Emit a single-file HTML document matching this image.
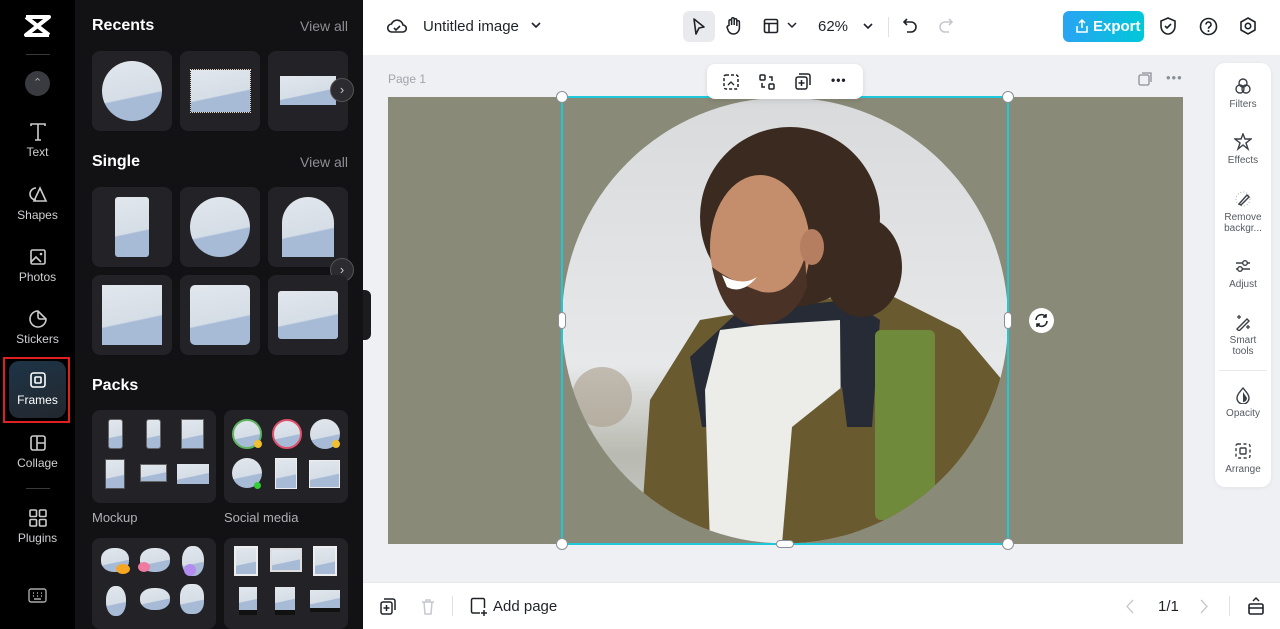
<!DOCTYPE html>
<html><head><meta charset="utf-8"><style>
*{box-sizing:border-box;margin:0;padding:0}
body{width:1280px;height:629px;overflow:hidden;position:relative;font-family:"Liberation Sans",sans-serif;background:#eef0f3}
.abs{position:absolute}
#side{left:0;top:0;width:75px;height:629px;background:#000}
.si{position:absolute;left:0;width:75px;text-align:center;color:#d0d0d4;font-size:12px}
.si svg{display:block;margin:0 auto 3px}
#panel{left:75px;top:0;width:288px;height:629px;background:#121214}
.h{position:absolute;color:#fff;font-weight:bold;font-size:16px}
.va{position:absolute;right:15px;color:#8e8e93;font-size:14px}
.card{position:absolute;width:80px;height:80px;background:#232327;border-radius:8px}
.img{position:absolute;background:linear-gradient(168deg,#e2e7ed 0%,#d5dde6 58%,#a7bad6 60%,#a7bad6 100%)}
.arrow{position:absolute;width:24px;height:24px;border-radius:50%;background:#2b2b30;border:1px solid #555;color:#ccc;font-size:13px;text-align:center;line-height:21px}
.pk{position:absolute;width:124px;height:93px;background:#232327;border-radius:8px}
.pl{position:absolute;color:#b0b0b5;font-size:13px}
#top{left:363px;top:0;width:917px;height:55px;background:#fff}
#bot{left:363px;top:582px;width:917px;height:47px;background:#fff;border-top:1px solid #e6e8eb}
.ic{position:absolute}
.rp{position:absolute;left:1215px;top:63px;width:56px;height:424px;background:#fff;border-radius:10px;box-shadow:0 1px 4px rgba(0,0,0,.06)}
.ri{position:absolute;left:0;width:56px;text-align:center;font-size:10px;color:#555a62;line-height:11px}
.ri svg{display:block;margin:0 auto 4px}
.hd{position:absolute;width:12px;height:12px;border-radius:50%;background:#fff;border:1px solid #8a8f98}
</style></head><body>

<div id="side" class="abs">
  <svg class="abs" style="left:24px;top:14px" width="27" height="24" viewBox="0 0 27 24"><path d="M2 3 L25 3 L2 21 L25 21 M2 3 L25 21" stroke="#fff" stroke-width="4" fill="none" stroke-linejoin="round"/></svg>
  <div class="abs" style="left:26px;top:54px;width:24px;height:1px;background:#3a3a3e"></div>
  <div class="abs" style="left:25px;top:71px;width:25px;height:25px;border-radius:50%;background:#3a3b40;color:#aaa;font-size:11px;text-align:center;line-height:25px">&#8963;</div>
  <div class="si" style="top:122px"><svg width="20" height="20" viewBox="0 0 20 20"><path d="M3 4 V2 H17 V4 M10 2 V18 M7 18 H13" stroke="#ccc" stroke-width="1.6" fill="none"/></svg>Text</div>
  <div class="si" style="top:185px"><svg width="20" height="20" viewBox="0 0 20 20"><path d="M8 3 a6 6 0 1 0 0 12" stroke="#ccc" stroke-width="1.6" fill="none"/><path d="M12 3 L18 16 H6 Z" stroke="#ccc" stroke-width="1.6" fill="none"/></svg>Shapes</div>
  <div class="si" style="top:247px"><svg width="20" height="20" viewBox="0 0 20 20"><rect x="3" y="3" width="14" height="14" rx="1.5" stroke="#ccc" stroke-width="1.6" fill="none"/><path d="M3 15 L8 10 L13 15" stroke="#ccc" stroke-width="1.6" fill="none"/><circle cx="13" cy="7" r="1.3" fill="#ccc"/></svg>Photos</div>
  <div class="si" style="top:309px"><svg width="20" height="20" viewBox="0 0 20 20"><path d="M10 2 a8 8 0 1 0 8 8 L10 2 Z M10 2 V8 a2 2 0 0 0 2 2 H18" stroke="#ccc" stroke-width="1.6" fill="none"/></svg>Stickers</div>
  <div class="abs" style="left:3px;top:357px;width:67px;height:66px;border:2px solid #e02020"></div>
  <div class="abs" style="left:9px;top:361px;width:57px;height:57px;border-radius:10px;background:linear-gradient(160deg,#1d3447,#23272e)"></div>
  <div class="si" style="top:370px;color:#fff"><svg width="20" height="20" viewBox="0 0 20 20"><rect x="3" y="3" width="14" height="14" rx="2.5" stroke="#fff" stroke-width="1.6" fill="none"/><rect x="7" y="7" width="6" height="6" rx="1" stroke="#fff" stroke-width="1.6" fill="none"/></svg>Frames</div>
  <div class="si" style="top:433px"><svg width="20" height="20" viewBox="0 0 20 20"><rect x="3" y="3" width="14" height="14" rx="2" stroke="#ccc" stroke-width="1.6" fill="none"/><path d="M9 3 V17 M9 10 H17" stroke="#ccc" stroke-width="1.6"/></svg>Collage</div>
  <div class="abs" style="left:26px;top:488px;width:24px;height:1px;background:#3a3a3e"></div>
  <div class="si" style="top:508px"><svg width="20" height="20" viewBox="0 0 20 20"><rect x="2" y="2" width="6.5" height="6.5" rx="1" stroke="#ccc" stroke-width="1.6" fill="none"/><rect x="11.5" y="2" width="6.5" height="6.5" rx="1" stroke="#ccc" stroke-width="1.6" fill="none"/><rect x="2" y="11.5" width="6.5" height="6.5" rx="1" stroke="#ccc" stroke-width="1.6" fill="none"/><rect x="11.5" y="11.5" width="6.5" height="6.5" rx="1" stroke="#ccc" stroke-width="1.6" fill="none"/></svg>Plugins</div>
  <svg class="abs" style="left:28px;top:588px" width="19" height="16" viewBox="0 0 19 16"><rect x="1" y="1" width="17" height="13" rx="2" stroke="#aaa" stroke-width="1.4" fill="none"/><path d="M5 5h1M9 5h1M13 5h1M5 8h1M9 8h1M13 8h1M6 11h7" stroke="#aaa" stroke-width="1.4"/></svg>
</div>

<div id="panel" class="abs">
  <div class="h" style="left:17px;top:17px">Recents</div><div class="va" style="top:18px">View all</div>
  <div class="card" style="left:17px;top:51px"><div class="img" style="left:10px;top:10px;width:60px;height:60px;border-radius:50%"></div></div>
  <div class="card" style="left:105px;top:51px"><div class="img" style="left:11px;top:19px;width:59px;height:42px;outline:1px dotted #e8d6c0"></div></div>
  <div class="card" style="left:193px;top:51px"><div class="img" style="left:12px;top:25px;width:56px;height:29px"></div></div>
  <div class="arrow" style="left:255px;top:78px">&#8250;</div>
  <div class="h" style="left:17px;top:153px">Single</div><div class="va" style="top:154px">View all</div>
  <div class="card" style="left:17px;top:187px"><div class="img" style="left:23px;top:10px;width:34px;height:60px;border-radius:3px"></div></div>
  <div class="card" style="left:105px;top:187px"><div class="img" style="left:10px;top:10px;width:60px;height:60px;border-radius:50%"></div></div>
  <div class="card" style="left:193px;top:187px"><div class="img" style="left:14px;top:10px;width:52px;height:60px;border-radius:26px 26px 0 0"></div></div>
  <div class="arrow" style="left:255px;top:258px">&#8250;</div>
  <div class="card" style="left:17px;top:275px"><div class="img" style="left:10px;top:10px;width:60px;height:60px"></div></div>
  <div class="card" style="left:105px;top:275px"><div class="img" style="left:10px;top:10px;width:60px;height:60px;border-radius:5px"></div></div>
  <div class="card" style="left:193px;top:275px"><div class="img" style="left:10px;top:16px;width:60px;height:48px;border-radius:3px"></div></div>
  <div class="h" style="left:17px;top:377px">Packs</div>
  <div class="pk" style="left:17px;top:410px">
    <div class="img" style="left:16px;top:9px;width:15px;height:30px;border-radius:3px;border:1px solid #666"></div>
    <div class="img" style="left:54px;top:9px;width:15px;height:30px;border-radius:3px;border:1px solid #666"></div>
    <div class="img" style="left:89px;top:9px;width:23px;height:30px;border:1px solid #666"></div>
    <div class="img" style="left:13px;top:49px;width:20px;height:30px;border:1px solid #555"></div>
    <div class="img" style="left:48px;top:54px;width:27px;height:18px;border:1px solid #666"></div>
    <div class="img" style="left:85px;top:54px;width:32px;height:20px"></div>
  </div>
  <div class="pl" style="left:17px;top:510px">Mockup</div>
  <div class="pk" style="left:149px;top:410px">
    <div class="img" style="left:8px;top:9px;width:30px;height:30px;border-radius:50%;border:2px solid #5fb45f"></div>
    <div class="img" style="left:48px;top:9px;width:30px;height:30px;border-radius:50%;border:2px solid #e0506a"></div>
    <div class="img" style="left:86px;top:9px;width:30px;height:30px;border-radius:50%"></div>
    <div class="abs" style="left:30px;top:30px;width:8px;height:8px;border-radius:50%;background:#f0c030"></div>
    <div class="abs" style="left:108px;top:30px;width:8px;height:8px;border-radius:50%;background:#f0c030"></div>
    <div class="img" style="left:8px;top:48px;width:30px;height:30px;border-radius:50%"></div>
    <div class="abs" style="left:30px;top:72px;width:7px;height:7px;border-radius:50%;background:#3c3"></div>
    <div class="img" style="left:51px;top:48px;width:22px;height:31px;border:1px solid #eee"></div>
    <div class="img" style="left:85px;top:50px;width:31px;height:28px;border:1px solid #eee"></div>
  </div>
  <div class="pl" style="left:149px;top:510px">Social media</div>
  <div class="pk" style="left:17px;top:538px;height:91px">
    <div class="img" style="left:9px;top:10px;width:28px;height:24px;border-radius:45%"></div>
    <div class="img" style="left:48px;top:10px;width:30px;height:24px;border-radius:45%"></div>
    <div class="img" style="left:90px;top:8px;width:22px;height:30px;border-radius:45%"></div>
    <div class="abs" style="left:24px;top:26px;width:14px;height:10px;border-radius:50%;background:#f5a623"></div>
    <div class="abs" style="left:46px;top:24px;width:12px;height:10px;border-radius:50%;background:#f07aa0"></div>
    <div class="abs" style="left:92px;top:26px;width:12px;height:12px;border-radius:50%;background:#b48cf0"></div>
    <div class="img" style="left:14px;top:48px;width:20px;height:30px;border-radius:45%"></div>
    <div class="img" style="left:48px;top:50px;width:30px;height:22px;border-radius:45%"></div>
    <div class="img" style="left:88px;top:46px;width:24px;height:30px;border-radius:40%"></div>
  </div>
  <div class="pk" style="left:149px;top:538px;height:91px">
    <div class="img" style="left:10px;top:8px;width:24px;height:30px;border:2px solid #eee"></div>
    <div class="img" style="left:46px;top:10px;width:32px;height:24px;border:2px solid #ddd"></div>
    <div class="img" style="left:89px;top:8px;width:24px;height:30px;border:2px solid #eee"></div>
    <div class="img" style="left:15px;top:49px;width:18px;height:28px;border-bottom:5px solid #111"></div>
    <div class="img" style="left:51px;top:49px;width:20px;height:28px;border-bottom:5px solid #111"></div>
    <div class="img" style="left:86px;top:52px;width:30px;height:22px;border-bottom:4px solid #111"></div>
  </div>
</div>
<div class="abs" style="left:363px;top:290px;width:8px;height:50px;background:#1c1c1f;border-radius:0 6px 6px 0"></div>

<div id="top" class="abs">
  <svg class="ic" style="left:24px;top:17px" width="20" height="18" viewBox="0 0 20 18"><path d="M5 15 a4 4 0 0 1 -0.5 -8 a6 6 0 0 1 11.5 1 a3.5 3.5 0 0 1 -0.5 7 Z" stroke="#1f2329" stroke-width="1.6" fill="none"/><path d="M7 11 l2 2 l4 -4" stroke="#1f2329" stroke-width="1.6" fill="none"/></svg>
  <div class="abs" style="left:60px;top:18px;font-size:15px;color:#1f2329">Untitled image</div>
  <svg class="ic" style="left:167px;top:21px" width="12" height="8"><path d="M2 2 L6 6 L10 2" stroke="#1f2329" stroke-width="1.6" fill="none"/></svg>
  <div class="abs" style="left:320px;top:11px;width:32px;height:31px;border-radius:6px;background:#e8eaee"></div>
  <svg class="ic" style="left:328px;top:17px" width="16" height="19"><path d="M3 2 L13 10 L8 11 L5 17 Z" stroke="#1f2329" stroke-width="1.6" fill="none" stroke-linejoin="round"/></svg>
  <svg class="ic" style="left:362px;top:16px" width="18" height="20"><path d="M4 10 V5 a1.3 1.3 0 0 1 2.6 0 V9 V3 a1.3 1.3 0 0 1 2.6 0 V9 V4 a1.3 1.3 0 0 1 2.6 0 V10 V6 a1.3 1.3 0 0 1 2.6 0 V12 a6 6 0 0 1 -6 6 a6 6 0 0 1 -5 -3 L2 11 a1.3 1.3 0 0 1 2 -1" stroke="#1f2329" stroke-width="1.5" fill="none"/></svg>
  <svg class="ic" style="left:400px;top:18px" width="16" height="16"><rect x="1.5" y="1.5" width="13" height="13" rx="1.5" stroke="#1f2329" stroke-width="1.6" fill="none"/><path d="M1.5 5.5 H14.5 M6 5.5 V14.5" stroke="#1f2329" stroke-width="1.6"/></svg>
  <svg class="ic" style="left:424px;top:22px" width="10" height="7"><path d="M1 1 L5 5 L9 1" stroke="#1f2329" stroke-width="1.5" fill="none"/></svg>
  <div class="abs" style="left:455px;top:18px;font-size:15px;color:#1f2329">62%</div>
  <svg class="ic" style="left:499px;top:22px" width="12" height="8"><path d="M2 2 L6 6 L10 2" stroke="#1f2329" stroke-width="1.6" fill="none"/></svg>
  <div class="abs" style="left:525px;top:17px;width:1px;height:20px;background:#dfe1e5"></div>
  <svg class="ic" style="left:539px;top:17px" width="16" height="18"><path d="M5 2 L2 5 L5 8 M2 5 H9 a5 5 0 0 1 0 10 H5" stroke="#1f2329" stroke-width="1.6" fill="none"/></svg>
  <svg class="ic" style="left:575px;top:17px" width="16" height="18"><path d="M11 2 L14 5 L11 8 M14 5 H7 a5 5 0 0 0 0 10 H11" stroke="#c5c8ce" stroke-width="1.6" fill="none"/></svg>
  <div class="abs" style="left:700px;top:11px;width:81px;height:31px;border-radius:6px;background:linear-gradient(90deg,#2aa3f3,#00c8d8);color:#fff;font-size:15px;font-weight:bold;line-height:31px;padding-left:30px">Export</div>
  <svg class="ic" style="left:712px;top:18px" width="14" height="16"><path d="M7 10 V2 M4 5 L7 2 L10 5 M2 8 V14 H12 V8" stroke="#fff" stroke-width="1.5" fill="none"/></svg>
  <svg class="ic" style="left:796px;top:16px" width="18" height="20"><path d="M9 2 L16 5 V10 a7 8 0 0 1 -7 8 a7 8 0 0 1 -7 -8 V5 Z" stroke="#1f2329" stroke-width="1.6" fill="none"/><path d="M6 10 l2 2 l4 -4" stroke="#1f2329" stroke-width="1.6" fill="none"/></svg>
  <svg class="ic" style="left:836px;top:17px" width="19" height="19"><circle cx="9.5" cy="9.5" r="8" stroke="#1f2329" stroke-width="1.6" fill="none"/><path d="M7 7.5 a2.5 2.5 0 1 1 3.5 2.3 c-1 .5 -1 1 -1 2" stroke="#1f2329" stroke-width="1.6" fill="none"/><circle cx="9.5" cy="14" r="1" fill="#1f2329"/></svg>
  <svg class="ic" style="left:876px;top:16px" width="18" height="20"><path d="M9 2 L16 6 V14 L9 18 L2 14 V6 Z" stroke="#1f2329" stroke-width="1.6" fill="none"/><circle cx="9" cy="10" r="2.7" stroke="#1f2329" stroke-width="1.6" fill="none"/></svg>
</div>

<div class="abs" style="left:388px;top:72px;font-size:12px;color:#a0a4ab">Page 1</div>
<svg class="ic" style="left:1138px;top:72px" width="14" height="14"><rect x="1" y="3" width="10" height="10" rx="1.5" stroke="#8a8f98" stroke-width="1.3" fill="none"/><path d="M4 1 H13 V10" stroke="#8a8f98" stroke-width="1.3" fill="none"/></svg>
<div class="abs" style="left:1166px;top:70px;font-size:13px;color:#8a8f98;letter-spacing:1px">•••</div>

<div class="abs" style="left:388px;top:97px;width:795px;height:447px;background:#8a8a78"></div>
<svg class="abs" style="left:562px;top:97px" width="446" height="447" viewBox="0 0 446 447">
  <defs><clipPath id="c"><circle cx="223" cy="223.5" r="223"/></clipPath>
  <linearGradient id="bg" x1="0" y1="0" x2="0" y2="1"><stop offset="0" stop-color="#d8dadb"/><stop offset=".6" stop-color="#e6e8ea"/><stop offset=".8" stop-color="#b9bab0"/><stop offset="1" stop-color="#c8ccd0"/></linearGradient></defs>
  <g clip-path="url(#c)">
    <rect width="446" height="447" fill="url(#bg)"/>
    <ellipse cx="40" cy="300" rx="30" ry="30" fill="#a89c8a" opacity=".6"/>
    <path d="M78 447 L88 303 L138 223 L198 213 L318 193 L398 233 L446 290 L446 447 Z" fill="#6a5a30"/>
    <path d="M128 260 L178 213 L288 203 L318 223 L310 330 L140 330 Z" fill="#262b36"/>
    <path d="M158 233 L198 228 L278 223 L280 447 L148 447 L143 293 Z" fill="#ecece8"/>
    <path d="M220 447 L230 330 L280 290 L300 447 Z" fill="#6a5a30"/>
    <rect x="313" y="233" width="60" height="190" rx="6" fill="#6f8a3a"/>
    <ellipse cx="228" cy="120" rx="90" ry="90" fill="#3b2a1f"/>
    <ellipse cx="300" cy="170" rx="40" ry="50" fill="#3b2a1f"/>
    <ellipse cx="198" cy="150" rx="50" ry="72" fill="#c48d6c"/>
    <path d="M150 170 Q160 220 190 228 Q230 230 245 190 L243 160 Q230 200 200 195 Q170 185 150 170 Z" fill="#4a3226"/>
    <path d="M160 178 Q180 190 195 180 Q180 198 165 190 Z" fill="#fff"/>
    <ellipse cx="250" cy="150" rx="12" ry="18" fill="#b57e60"/>
  </g>
</svg>
<div class="abs" style="left:561px;top:96px;width:448px;height:449px;border:2px solid #1ec8d8"></div>
<div class="hd" style="left:556px;top:91px"></div><div class="hd" style="left:1002px;top:91px"></div>
<div class="hd" style="left:556px;top:538px"></div><div class="hd" style="left:1002px;top:538px"></div>
<div class="abs" style="left:558px;top:312px;width:8px;height:17px;border-radius:4px;background:#fff;border:1px solid #8a8f98"></div>
<div class="abs" style="left:1004px;top:312px;width:8px;height:17px;border-radius:4px;background:#fff;border:1px solid #8a8f98"></div>
<div class="abs" style="left:776px;top:540px;width:18px;height:8px;border-radius:4px;background:#fff;border:1px solid #8a8f98"></div>
<div class="abs" style="left:1029px;top:308px;width:25px;height:25px;border-radius:50%;background:#fff"></div>
<svg class="ic" style="left:1033px;top:312px" width="17" height="17"><path d="M3 8 a5.5 5.5 0 0 1 10 -3 M14 9 a5.5 5.5 0 0 1 -10 3 M13 2 V5 H10 M4 15 V12 H7" stroke="#1f2329" stroke-width="1.6" fill="none"/></svg>

<div class="abs" style="left:707px;top:64px;width:156px;height:35px;background:#fff;border-radius:8px;box-shadow:0 2px 6px rgba(0,0,0,.1)"></div>
<svg class="ic" style="left:723px;top:74px" width="16" height="16"><rect x="1" y="1" width="14" height="14" rx="2" stroke="#1f2329" stroke-width="1.5" fill="none" stroke-dasharray="3 2"/><path d="M5 11 L8 8 L11 11" stroke="#1f2329" stroke-width="1.3" fill="none"/></svg>
<svg class="ic" style="left:759px;top:74px" width="16" height="16"><rect x="1" y="1" width="5" height="5" rx="1" stroke="#1f2329" stroke-width="1.5" fill="none"/><rect x="10" y="10" width="5" height="5" rx="1" stroke="#1f2329" stroke-width="1.5" fill="none"/><path d="M10 3 H13 V7 M6 13 H3 V9" stroke="#1f2329" stroke-width="1.5" fill="none"/></svg>
<svg class="ic" style="left:795px;top:73px" width="16" height="17"><rect x="1" y="4" width="11" height="12" rx="2" stroke="#1f2329" stroke-width="1.5" fill="none"/><path d="M4 1 H13 a2 2 0 0 1 2 2 V12" stroke="#1f2329" stroke-width="1.5" fill="none"/><path d="M6.5 7 V13 M3.5 10 H9.5" stroke="#1f2329" stroke-width="1.5"/></svg>
<div class="abs" style="left:831px;top:73px;font-size:12px;color:#1f2329;font-weight:bold;letter-spacing:1px">•••</div>

<div class="rp"></div>
<div class="ri" style="left:1215px;top:77px"><svg width="18" height="18"><circle cx="9" cy="6" r="4" stroke="#3a3f47" stroke-width="1.4" fill="none"/><circle cx="6" cy="12" r="4" stroke="#3a3f47" stroke-width="1.4" fill="none"/><circle cx="12" cy="12" r="4" stroke="#3a3f47" stroke-width="1.4" fill="none"/></svg>Filters</div>
<div class="ri" style="left:1215px;top:133px"><svg width="18" height="18"><path d="M9 1 L11 6 L17 6 L12 10 L14 16 L9 12 L4 16 L6 10 L1 6 L7 6 Z" stroke="#3a3f47" stroke-width="1.4" fill="none"/></svg>Effects</div>
<div class="ri" style="left:1215px;top:190px"><svg width="18" height="18"><circle cx="9" cy="9" r="7" stroke="#aaa" stroke-width="1" fill="none" stroke-dasharray="1 2"/><path d="M5 14 L13 5 L15 7 L7 15 Z" stroke="#3a3f47" stroke-width="1.4" fill="none"/></svg>Remove<br>backgr...</div>
<div class="ri" style="left:1215px;top:257px"><svg width="18" height="18"><path d="M2 6 H16 M2 12 H16" stroke="#3a3f47" stroke-width="1.4"/><circle cx="11" cy="6" r="2.3" fill="#fff" stroke="#3a3f47" stroke-width="1.4"/><circle cx="6" cy="12" r="2.3" fill="#fff" stroke="#3a3f47" stroke-width="1.4"/></svg>Adjust</div>
<div class="ri" style="left:1215px;top:313px"><svg width="18" height="18"><path d="M3 16 L13 6 L15 8 L5 18 Z" stroke="#3a3f47" stroke-width="1.4" fill="none"/><path d="M5 2 V6 M3 4 H7 M14 12 V16 M12 14 H16" stroke="#3a3f47" stroke-width="1.3"/></svg>Smart<br>tools</div>
<div class="abs" style="left:1219px;top:370px;width:48px;height:1px;background:#e6e8eb"></div>
<div class="ri" style="left:1215px;top:386px"><svg width="18" height="18"><path d="M9 2 C5 7 3 9 3 12 a6 6 0 0 0 12 0 C15 9 13 7 9 2 Z" stroke="#3a3f47" stroke-width="1.4" fill="none"/><path d="M9 6 V16 a4 4 0 0 0 4 -4 Z" fill="#3a3f47"/></svg>Opacity</div>
<div class="ri" style="left:1215px;top:442px"><svg width="18" height="18"><rect x="2" y="2" width="14" height="14" rx="2" stroke="#3a3f47" stroke-width="1.4" fill="none" stroke-dasharray="3 2.5"/><rect x="6" y="6" width="6" height="6" rx="1" stroke="#3a3f47" stroke-width="1.4" fill="none"/></svg>Arrange</div>

<div id="bot" class="abs">
  <svg class="ic" style="left:17px;top:15px" width="17" height="18"><rect x="1" y="4" width="11" height="12" rx="2" stroke="#1f2329" stroke-width="1.5" fill="none"/><path d="M4 1 H13 a2 2 0 0 1 2 2 V12" stroke="#1f2329" stroke-width="1.5" fill="none"/><path d="M6.5 7 V13 M3.5 10 H9.5" stroke="#1f2329" stroke-width="1.5"/></svg>
  <svg class="ic" style="left:57px;top:15px" width="16" height="18"><path d="M2 4 H14 M4 4 L5 16 H11 L12 4 M6 4 V2 H10 V4" stroke="#c5c8ce" stroke-width="1.5" fill="none"/></svg>
  <div class="abs" style="left:89px;top:13px;width:1px;height:20px;background:#dfe1e5"></div>
  <svg class="ic" style="left:107px;top:14px" width="18" height="20"><path d="M10 16 H3 a1.5 1.5 0 0 1 -1.5 -1.5 V3 a1.5 1.5 0 0 1 1.5 -1.5 H13 a1.5 1.5 0 0 1 1.5 1.5 V11 M14 13 V19 M11 16 H17" stroke="#1f2329" stroke-width="1.5" fill="none"/></svg>
  <div class="abs" style="left:130px;top:15px;font-size:15px;color:#1f2329">Add page</div>
  <svg class="ic" style="left:762px;top:16px" width="10" height="15"><path d="M8 1 L2 7.5 L8 14" stroke="#c5c8ce" stroke-width="1.3" fill="none"/></svg>
  <div class="abs" style="left:795px;top:15px;font-size:15px;color:#1f2329">1/1</div>
  <svg class="ic" style="left:836px;top:16px" width="10" height="15"><path d="M2 1 L8 7.5 L2 14" stroke="#c5c8ce" stroke-width="1.3" fill="none"/></svg>
  <div class="abs" style="left:866px;top:13px;width:1px;height:20px;background:#dfe1e5"></div>
  <svg class="ic" style="left:884px;top:13px" width="18" height="20"><path d="M6 5 L9 2 L12 5" stroke="#1f2329" stroke-width="1.5" fill="none"/><rect x="2" y="8" width="14" height="10" rx="1.5" stroke="#1f2329" stroke-width="1.6" fill="none"/><path d="M2 12 H16" stroke="#1f2329" stroke-width="1.5"/></svg>
</div>
</body></html>
